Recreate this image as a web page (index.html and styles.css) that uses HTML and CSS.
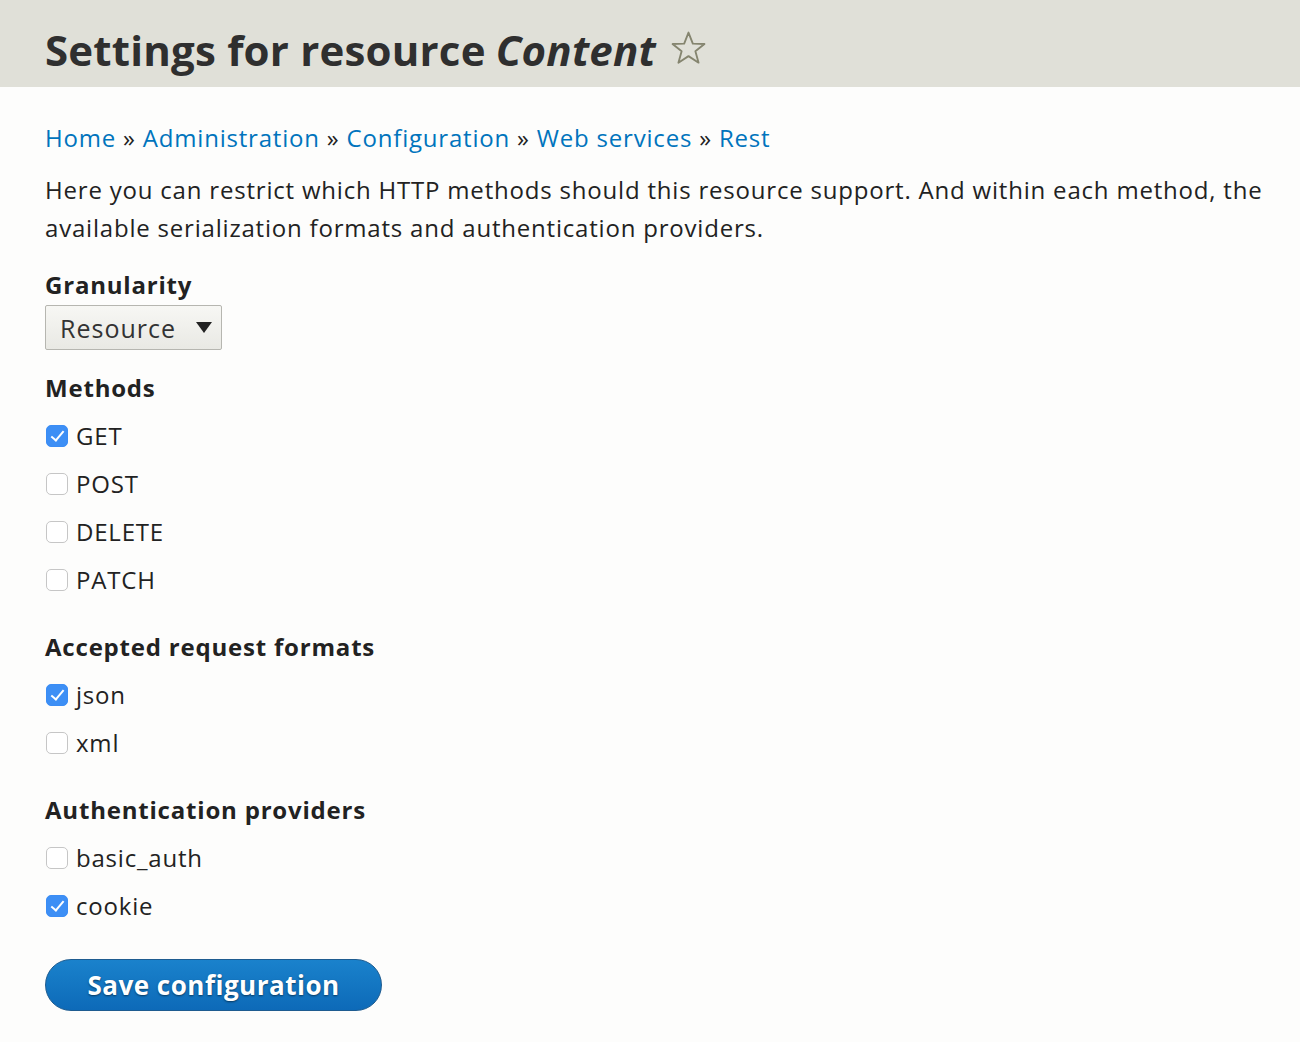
FILE: index.html
```html
<!DOCTYPE html>
<html lang="en">
<head>
<meta charset="utf-8">
<title>Settings for resource Content</title>
<link rel="stylesheet" href="styles.css">
</head>
<body>
<header class="page-header">
  <h1 class="page-title">Settings for resource <em>Content</em>
    <svg class="star" width="37" height="37" viewBox="0 0 36 36" aria-hidden="true">
      <path d="M18 2.5 L22.2 13.2 L33.5 13.6 L24.7 20.7 L27.8 31.8 L18 25.4 L8.2 31.8 L11.3 20.7 L2.5 13.6 L13.8 13.2 Z" fill="none" stroke="#85856f" stroke-width="1.8" stroke-linejoin="round"/>
    </svg>
  </h1>
</header>
<main class="content">
  <nav class="breadcrumb">
    <a href="#">Home</a> » <a href="#">Administration</a> » <a href="#">Configuration</a> » <a href="#">Web services</a> » <a href="#">Rest</a>
  </nav>
  <p class="intro">Here you can restrict which HTTP methods should this resource support. And within each method, the available serialization formats and authentication providers.</p>

  <div class="field">
    <div class="field-label">Granularity</div>
    <div class="select">Resource <span class="caret"></span></div>
  </div>

  <div class="field">
    <div class="field-label">Methods</div>
    <div class="checks">
      <div class="check"><span class="box on"></span>GET</div>
      <div class="check"><span class="box"></span>POST</div>
      <div class="check"><span class="box"></span>DELETE</div>
      <div class="check"><span class="box"></span>PATCH</div>
    </div>
  </div>

  <div class="field">
    <div class="field-label">Accepted request formats</div>
    <div class="checks">
      <div class="check"><span class="box on"></span>json</div>
      <div class="check"><span class="box"></span>xml</div>
    </div>
  </div>

  <div class="field">
    <div class="field-label">Authentication providers</div>
    <div class="checks">
      <div class="check"><span class="box"></span>basic_auth</div>
      <div class="check"><span class="box on"></span>cookie</div>
    </div>
  </div>

  <button class="save" type="button">Save configuration</button>
</main>
</body>
</html>
```
FILE: styles.css
```css
html, body {
  margin: 0;
  padding: 0;
}
body {
  background: #fdfdfc;
  color: #222;
  font-family: "Open Sans", "DejaVu Sans", sans-serif;
  font-size: 24px;
  letter-spacing: 0.8px;
}
.page-header {
  background: #e0e0d8;
  height: 87px;
  padding: 11px 45px 0;
  box-sizing: border-box;
  display: flex;
  align-items: center;
}
.page-title {
  margin: 0;
  font-size: 42px;
  font-weight: 700;
  color: #2f2f2f;
  display: flex;
  align-items: center;
  gap: 14px;
  letter-spacing: 0.2px;
}
.page-title em {
  font-style: italic;
  margin-left: -4px;
}
.star {
  display: block;
  margin-top: -2px;
}
.content {
  padding: 33px 20px 30px 45px;
}
.breadcrumb {
  line-height: 36px;
  color: #222;
}
.breadcrumb a {
  color: #0074bd;
  text-decoration: none;
}
.intro {
  margin: 15px 0 0;
  line-height: 38px;
  max-width: 1235px;
  color: #222;
}
.field {
  margin-top: 22px;
}
.field-label {
  font-weight: 700;
  line-height: 32px;
  color: #222;
}
.select {
  margin-top: 4px;
  width: 177px;
  height: 45px;
  box-sizing: border-box;
  border: 1px solid #b6b6b0;
  border-radius: 2px;
  background: linear-gradient(#f7f7f4, #e9e9e4);
  display: flex;
  align-items: center;
  justify-content: space-between;
  padding: 0 9px 0 14px;
  color: #333;
  font-size: 25px;
  letter-spacing: 1px;
}
.caret {
  width: 0;
  height: 0;
  border-left: 8px solid transparent;
  border-right: 8px solid transparent;
  border-top: 11px solid #222;
}
.checks {
  display: flex;
  flex-direction: column;
  gap: 16px;
  margin-top: 16px;
  padding-bottom: 13px;
}
.check {
  display: flex;
  align-items: center;
  gap: 8px;
  line-height: 32px;
  color: #222;
}
.box {
  width: 22px;
  height: 22px;
  box-sizing: border-box;
  border: 1px solid #c6c6c6;
  border-radius: 5px;
  background: #fff;
  margin-left: 1px;
  position: relative;
}
.box.on {
  border-color: #3b8df5;
  background: #3d8ff5;
}
.box.on::after {
  content: "";
  position: absolute;
  left: 7px;
  top: 2px;
  width: 5px;
  height: 11px;
  border-right: 2.5px solid #fff;
  border-bottom: 2.5px solid #fff;
  transform: rotate(40deg);
}
.save {
  margin-top: 24px;
  display: block;
  width: 337px;
  height: 52px;
  border: 1px solid #1e5c90;
  border-radius: 26px;
  background: linear-gradient(#1a82cc, #0d6ab8);
  color: #fff;
  font-family: "Open Sans", "DejaVu Sans", sans-serif;
  font-size: 26px;
  font-weight: 700;
  letter-spacing: 0.5px;
  text-shadow: 0 1px 2px rgba(0, 0, 0, 0.5);
}
```
